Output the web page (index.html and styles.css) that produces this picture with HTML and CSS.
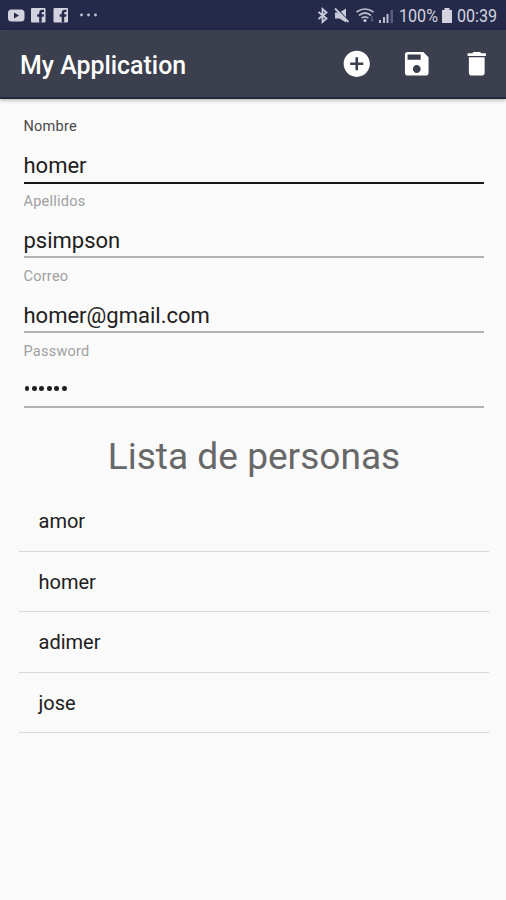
FILE: index.html
```html
<!DOCTYPE html>
<html lang="es">
<head>
<meta charset="utf-8">
<title>My Application</title>
<link rel="stylesheet" href="styles.css">
</head>
<body>
<div class="status">
  <svg class="notices" viewBox="0 0 100 30" width="100" height="30">
    <rect x="8" y="9.5" width="16.5" height="12" rx="3.5" fill="#d2d3df"/>
    <path d="M14 12.5v6l5-3z" fill="#252a4a"/>
    <rect x="31" y="8" width="14.5" height="14.5" rx="1" fill="#d2d3df"/>
    <path d="M39.2 22.5v-5.800h-2v-2.400h2v-1.600c0-2 1.200-3 3-3h1.800v2.300h-1.200c-.8 0-1.100.4-1.100 1.100v1.200h2.300l-.4 2.400h-1.900v5.800z" fill="#252a4a"/>
    <rect x="53.500" y="8" width="14.500" height="14.500" rx="1" fill="#d2d3df"/>
    <path d="M61.700 22.500v-5.800h-2v-2.400h2v-1.600c0-2 1.200-3 3-3h1.800v2.300h-1.200c-.8 0-1.100.4-1.100 1.100v1.200h2.300l-.4 2.400h-1.900v5.800z" fill="#252a4a"/>
    <g fill="#c3c5d6"><circle cx="81.500" cy="15" r="1.400"/><circle cx="88.500" cy="15" r="1.400"/><circle cx="95.500" cy="15" r="1.400"/></g>
  </svg>
  <div class="system">
    <svg viewBox="0 0 80 30" width="80" height="30">
      <path d="M3.500 12l8 6.500-4 3.500V9l4 3.500-8 6.500" fill="none" stroke="#c9cbda" stroke-width="1.800"/>
      <path d="M20 12.500h4.500l6.500-4v14l-6.500-4H20z" fill="#c9cbda"/>
      <path d="M21.500 8l13 14" stroke="#252a4a" stroke-width="1.200"/>
      <path d="M20 8.500l13.500 13.500" stroke="#c9cbda" stroke-width="1.800"/>
      <g fill="none" stroke="#b9bccd" stroke-width="1.700"><path d="M41.500 12q8.500-6 17 0"/><path d="M44 15.500q6-5 12 0"/><path d="M46.500 18.200q3.500-2.700 7 0"/></g>
      <circle cx="50" cy="20.500" r="1.600" fill="#c9cbda"/>
      <path d="M57 16v5M55.500 19.500l1.500 1.800 1.500-1.800" stroke="#676b86" fill="none"/>
      <g fill="#b9bccd"><path d="M64 20h2v3h-2zM68 17h2v6h-2zM71.500 14h2v9h-2z"/><path d="M75.500 10H78v13h-2.500z" fill="#5a5e7c"/></g>
    </svg>
    <span class="percent">100%</span>
    <svg class="battery" viewBox="0 0 12 30" width="12" height="30"><path d="M3.500 8h5v2H11v13H1V10h2.500z" fill="#d2d3df"/></svg>
    <span class="clock">00:39</span>
  </div>
</div>
<header class="appbar">
  <h1>My Application</h1>
  <nav class="actions">
    <svg viewBox="0 0 24 24"><path d="M12 2C6.480 2 2 6.480 2 12s4.480 10 10 10 10-4.480 10-10S17.520 2 12 2zm5 11h-4v4h-2v-4H7v-2h4V7h2v4h4v2z"/></svg>
    <svg viewBox="0 0 24 24"><path d="M17 3H5c-1.110 0-2 .9-2 2v14c0 1.100.890 2 2 2h14c1.100 0 2-.9 2-2V7l-4-4zm-5 16c-1.660 0-3-1.340-3-3s1.340-3 3-3 3 1.340 3 3-1.340 3-3 3zm3-10H5V5h10v4z"/></svg>
    <svg viewBox="0 0 24 24"><path d="M6 19c0 1.100.9 2 2 2h8c1.100 0 2-.9 2-2V7H6v12zM19 4h-3.500l-1-1h-5l-1 1H5v2h14V4z"/></svg>
  </nav>
</header>
<main>
  <section class="form">
    <div class="field active"><div class="label">Nombre</div><div class="value">homer</div></div>
    <div class="field"><div class="label">Apellidos</div><div class="value">psimpson</div></div>
    <div class="field"><div class="label">Correo</div><div class="value">homer@gmail.com</div></div>
    <div class="field"><div class="label">Password</div><div class="value dots"><i></i><i></i><i></i><i></i><i></i><i></i></div></div>
  </section>
  <h2>Lista de personas</h2>
  <ul class="people"><li>amor</li><li>homer</li><li>adimer</li><li>jose</li></ul>
</main>
</body>
</html>
```
FILE: styles.css
```css
* { box-sizing: border-box; }
body { margin: 0; height: 900px; overflow: hidden; background: #fafafa; color: #202020; font-family: Roboto, sans-serif; }
svg { display: block; flex: none; }
.status { display: flex; justify-content: space-between; height: 30px; background: #252a4a; }
.system { display: flex; width: 191px; color: #d2d3df; font-size: 17.500px; line-height: 33px; white-space: nowrap; }
.percent { width: 39px; margin-left: 4px; transform: scaleX(.92); transform-origin: left; }
.battery { margin-left: 3px; }
.clock { margin-left: 4px; transform: scaleX(.92); transform-origin: left; }
.appbar { display: flex; align-items: center; justify-content: space-between; height: 69px; padding: 0 13.500px 0 20px; background: #3c3f4d; border-bottom: 2px solid #24263e; box-shadow: 0 1px 4px rgba(0,0,0,.35); color: #fff; }
h1 { margin: 4px 0 0; font-size: 24.900px; font-weight: 500; line-height: 30px; }
.actions { display: flex; gap: 28.300px; margin-top: 1px; }
.actions svg { width: 31.500px; height: 31.500px; fill: #fff; }
main { padding: 14px 17px 0 19px; }
.form { padding: 0 5.500px 0 4.500px; }
.field { height: 75px; }
.label { height: 26px; color: #a0a0a0; font-size: 14.500px; line-height: 27px; letter-spacing: .25px; }
.active .label { color: #484848; }
.value { height: 44px; padding-top: 12px; border-bottom: 2px solid #b2b2b2; font-size: 22px; line-height: 30px; }
.active .value { height: 45px; border-bottom: 2px solid #181818; }
.dots { display: flex; gap: 2.900px; padding: 22px 0 0 1px; }
.dots i { width: 4.600px; height: 4.600px; border-radius: 50%; background: #202020; }
h2 { margin: 22px 0 0; color: #686868; font-size: 37.100px; font-weight: 400; line-height: 44px; text-align: center; }
.people { margin: 12px 0 0; padding: 0; list-style: none; }
.people li { height: 60.500px; padding: 0 19.500px; border-bottom: 1px solid #d8d8d8; font-size: 20px; line-height: 61px; }
```
